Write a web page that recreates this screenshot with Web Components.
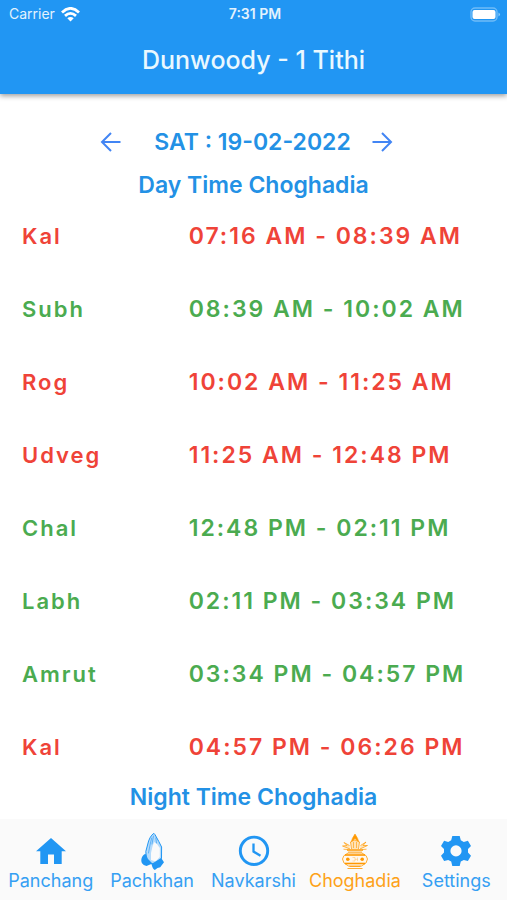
<!DOCTYPE html>
<html lang="en">
<head>
<meta charset="utf-8">
<meta name="viewport" content="width=device-width, initial-scale=1">
<title>Choghadia</title>
<style>
  html, body { height: 100%; margin: 0; }
  body { font-family: Inter, "Liberation Sans", sans-serif; background: #fff; }
</style>
</head>
<body>
<choghadia-app></choghadia-app>
<script>
const define = (name, html, setup) => {
  const template = document.createElement('template');
  template.innerHTML = html;
  customElements.define(name, class extends HTMLElement {
    constructor() {
      super();
      this.attachShadow({ mode: 'open' }).append(template.content.cloneNode(true));
    }
    connectedCallback() { if (setup) setup(this, this.shadowRoot); }
  });
};

define('status-bar', `
<style>
  :host { display: grid; grid-template-columns: 1fr auto 1fr; align-items: center; height: 28px; padding: 0 6px 0 9px; font-size: 14px; line-height: 20px; color: #e3f2fd; }
  .left { display: flex; align-items: center; gap: 6px; }
  .time { font-weight: 600; font-size: 14px; }
  .battery { justify-self: end; }
  svg { display: block; }
</style>
<div class="left"><span>Carrier</span>
  <svg width="19" height="15" viewBox="0 0 19 15" fill="none" stroke="#fff" stroke-width="2.8" aria-label="Wi-Fi">
    <path d="M1 5.4Q9.500-2.600 18 5.400"/><path d="M4 8.900Q9.500 3.900 15 8.900"/>
    <path d="M9.500 14.400L6.300 11.300Q9.500 8.600 12.700 11.300Z" fill="#fff" stroke="none"/>
  </svg>
</div>
<span class="time">7:31 PM</span>
<svg class="battery" width="31" height="15" viewBox="0 0 31 15" aria-label="Battery full">
  <rect x="1" y="1" width="26" height="13" rx="4" fill="none" stroke="#6fbcf8" stroke-width="1.400"/>
  <rect x="2.500" y="3" width="23" height="9" rx="2" fill="#fff"/>
  <path d="M28.500 5.500q3 2 0 4z" fill="#8fcbfa"/>
</svg>`);

define('app-header', `
<style>
  :host { display: block; flex: none; position: relative; z-index: 1; background: #2196f3; box-shadow: 0 2px 5px rgba(0,0,0,.38); }
  h1 { margin: 0; padding: 14px 0 16px; font-size: 25px; line-height: 36px; font-weight: 500; text-align: center; color: #e9f8ff; }
</style>
<status-bar></status-bar>
<h1><slot></slot></h1>`);

define('date-picker', `
<style>
  :host { display: flex; align-items: center; justify-content: center; gap: 20px; height: 44px; padding-right: 14px; color: #2391e5; }
  .date { padding-left: 12px; font-size: 23px; line-height: 28px; font-weight: 600; }
  button { display: block; padding: 0; border: 0; background: none; color: #4285f4; }
  svg { display: block; fill: none; stroke: currentColor; stroke-width: 2; }
</style>
<button aria-label="Previous day"><svg width="22" height="22" viewBox="0 0 22 22"><path d="M20.500 11H2M11 2L2 11L11 20"/></svg></button>
<span class="date"><slot></slot></span>
<button aria-label="Next day"><svg width="22" height="22" viewBox="0 0 22 22"><path d="M1.500 11H20M11 2L20 11L11 20"/></svg></button>`);

define('section-title', `
<style>
  :host { display: block; }
  h2 { margin: 0; font-size: 23px; line-height: 28px; font-weight: 600; text-align: center; color: #2391e5; }
</style>
<h2><slot></slot></h2>`);

define('choghadia-table', `
<style>
  :host { display: block; padding: 0 22px; }
  table { width: 100%; border-collapse: collapse; table-layout: fixed; font-size: 22px; line-height: 28px; letter-spacing: 2px; }
  th, td { height: 73px; padding: 0; text-align: left; vertical-align: middle; font-weight: 600; white-space: nowrap; }
  th { width: 36%; }
  td { font-size: 23px; }
  .bad { color: #ef4338; }
  .good { color: #4bab50; }
</style>
<table aria-label="Day time choghadia"><tbody></tbody></table>`, (el, root) => {
  const rows = [
    ['Kal', '07:16 AM - 08:39 AM', 'bad'],
    ['Subh', '08:39 AM - 10:02 AM', 'good'],
    ['Rog', '10:02 AM - 11:25 AM', 'bad'],
    ['Udveg', '11:25 AM - 12:48 PM', 'bad'],
    ['Chal', '12:48 PM - 02:11 PM', 'good'],
    ['Labh', '02:11 PM - 03:34 PM', 'good'],
    ['Amrut', '03:34 PM - 04:57 PM', 'good'],
    ['Kal', '04:57 PM - 06:26 PM', 'bad']
  ];
  root.querySelector('tbody').innerHTML = rows.map(([name, time, kind]) =>
    `<tr class="${kind}"><th scope="row">${name}</th><td>${time}</td></tr>`).join('');
});

define('nav-item', `
<style>
  :host { display: block; flex: 1 1 0; min-width: 0; color: #2196f3; }
  :host([active]) { color: #ff9800; }
  a { display: flex; flex-direction: column; align-items: center; color: inherit; text-decoration: none; font-size: 18px; line-height: 22px; white-space: nowrap; }
  .label { opacity: .9; }
</style>
<a href="#"><slot name="icon"></slot><span class="label"><slot></slot></span></a>`, (el, root) => {
  if (el.hasAttribute('active')) root.querySelector('a').setAttribute('aria-current', 'page');
});

define('bottom-nav', `
<style>
  :host { display: block; flex: none; background: #fafafa; }
  nav { display: flex; padding: 13px 0 8px; }
  svg { display: block; width: 38px; height: 38px; }
</style>
<nav aria-label="Main">
  <nav-item><svg slot="icon" viewBox="0 0 38 38" fill="currentColor"><path d="M19 6L4 19.300H8.300V32H16V22.500H22V32H29.700V19.300H34Z"/></svg>Panchang</nav-item>
  <nav-item>
    <svg slot="icon" viewBox="0 0 38 38" fill="none" stroke="currentColor" stroke-linejoin="round" stroke-linecap="round">
      <path d="M20.500 1.500C18 3 15.500 8 14.800 12L12.800 19.500L13.500 27L17 31.500L21.500 32L28.500 26.500L28.600 15L25.800 9.500L22.200 3Z" fill="#b5dbfb" stroke-width="1"/>
      <path d="M21 10L19.600 14L18 21V28L22.500 29.500L26.800 25V16L24 12Z" fill="#fafafa" stroke="none"/>
      <path d="M18.700 6L17 13L15.500 21M20.500 4L19 12M22.800 6L23.500 11" stroke-width=".6"/>
      <path d="M12.500 21.800C8.500 23.300 7.500 28.500 9 31.200Q11 34 13.500 34L19.500 31.500L15 27Z" fill="currentColor" stroke="none"/>
      <path d="M28.200 26L18.500 32Q19.500 37 21.800 38L24.500 36L27.200 35.200L31 30.200Z" fill="currentColor" stroke="none"/>
    </svg>Pachkhan</nav-item>
  <nav-item><svg slot="icon" viewBox="0 0 38 38" fill="none" stroke="currentColor"><circle cx="19" cy="18.800" r="13.700" stroke-width="2.900"/><path d="M18.500 11.500V19.500L25.500 23.800" stroke-width="2.300"/></svg>Navkarshi</nav-item>
  <nav-item active>
    <svg slot="icon" viewBox="0 0 38 38" fill="none" stroke="currentColor" stroke-linejoin="round">
      <path d="M15 10.500Q15.800 6.500 19 2Q22.200 6.500 23 10.500L19 6.500Z" fill="currentColor" stroke-width=".6"/>
      <path d="M15.500 17L14.500 10L18.800 8L23.500 10L22.500 17M14 17L6.500 14L11 13.500L8 10.500L13.500 13.500M24 17L31.500 13.500L27 13.500L30 10L24.500 13.500M11.500 17.500L7.500 17.200M26.500 17.500L30.500 17.200" fill="#ffe3b8" stroke-width=".7"/>
      <path d="M17.500 10V16M20.500 10V16" stroke-width=".6"/>
      <path d="M11 18H27" stroke-width="1.500"/><path d="M12 20H26" stroke-width=".7"/>
      <path d="M12 21H26Q31.500 23.500 31.500 27Q31.500 31.500 25.500 34H12.500Q6.500 31.500 6.500 27Q6.500 23.500 12 21Z" fill="#fff8ee" stroke-width=".8"/>
      <path d="M9 23H29" stroke-width="1.600"/><path d="M9 31.500H29" stroke-width="1.600"/>
      <circle cx="11.800" cy="27.200" r="1.800" fill="currentColor" stroke="none"/><circle cx="26.200" cy="27.200" r="1.800" fill="currentColor" stroke="none"/>
      <path d="M16.500 25.500H19V29H16.500M19 27.300H21.500M21.500 25.500V29" stroke-width=".5" opacity=".6"/>
      <path d="M13.500 34.500H24.500M11.500 36.500H26.500" stroke-width=".8"/>
    </svg>Choghadia</nav-item>
  <nav-item><svg slot="icon" viewBox="0 0 38 38" fill="currentColor"><path fill-rule="evenodd" d="M15.300 4H22.700L23.800 8.200L26.800 9.900L30.900 8.700L34 14L31 17.100V20.600L34 23.700L30.900 29L26.800 27.900L23.800 29.600L22.700 34H15.300L14.200 29.600L11.200 27.900L7.100 29L4 23.700L7 20.600V17.100L4 14L7.100 8.700L11.200 9.900L14.200 8.200ZM19 13.300a5.600 5.600 0 1 0 0 11.200a5.600 5.600 0 1 0 0-11.200Z"/></svg>Settings</nav-item>
</nav>`);

define('choghadia-app', `
<style>
  :host { display: flex; flex-direction: column; height: 100%; overflow: hidden; background: #fff; }
  main { flex: 1 1 0; min-height: 0; overflow-y: auto; scrollbar-width: none; padding-top: 26px; }
  .day { padding: 7px 0 0; }
</style>
<app-header>Dunwoody - 1 Tithi</app-header>
<main>
  <date-picker>SAT : 19-02-2022</date-picker>
  <section-title class="day">Day Time Choghadia</section-title>
  <choghadia-table></choghadia-table>
  <section-title>Night Time Choghadia</section-title>
</main>
<bottom-nav></bottom-nav>`);
</script>
</body>
</html>
